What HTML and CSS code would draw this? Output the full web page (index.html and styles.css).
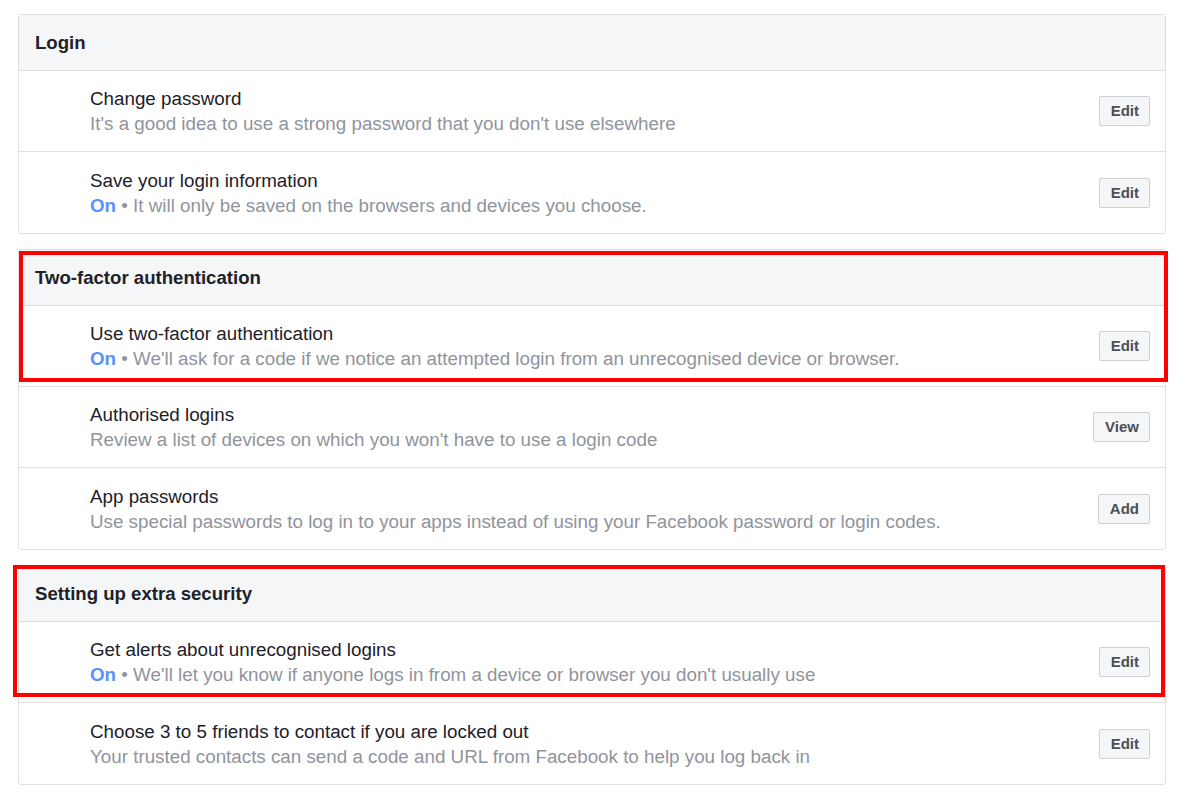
FILE: index.html
```html
<!DOCTYPE html>
<html>
<head>
<meta charset="utf-8">
<link rel="stylesheet" href="styles.css">
</head>
<body>
<div class="page">
  <section class="card">
    <div class="card-head">Login</div>
    <div class="row">
      <div class="text">
        <div class="title">Change password</div>
        <div class="sub">It's a good idea to use a strong password that you don't use elsewhere</div>
      </div>
      <button class="btn">Edit</button>
    </div>
    <div class="row">
      <div class="text">
        <div class="title">Save your login information</div>
        <div class="sub"><span class="on">On</span> • It will only be saved on the browsers and devices you choose.</div>
      </div>
      <button class="btn">Edit</button>
    </div>
  </section>

  <section class="card">
    <div class="highlight hl-two"></div>
    <div class="card-head">Two-factor authentication</div>
    <div class="row">
      <div class="text">
        <div class="title">Use two-factor authentication</div>
        <div class="sub"><span class="on">On</span> • We'll ask for a code if we notice an attempted login from an unrecognised device or browser.</div>
      </div>
      <button class="btn">Edit</button>
    </div>
    <div class="row">
      <div class="text">
        <div class="title">Authorised logins</div>
        <div class="sub">Review a list of devices on which you won't have to use a login code</div>
      </div>
      <button class="btn">View</button>
    </div>
    <div class="row">
      <div class="text">
        <div class="title">App passwords</div>
        <div class="sub">Use special passwords to log in to your apps instead of using your Facebook password or login codes.</div>
      </div>
      <button class="btn">Add</button>
    </div>
  </section>

  <section class="card">
    <div class="highlight hl-extra"></div>
    <div class="card-head">Setting up extra security</div>
    <div class="row">
      <div class="text">
        <div class="title">Get alerts about unrecognised logins</div>
        <div class="sub"><span class="on">On</span> • We'll let you know if anyone logs in from a device or browser you don't usually use</div>
      </div>
      <button class="btn">Edit</button>
    </div>
    <div class="row">
      <div class="text">
        <div class="title">Choose 3 to 5 friends to contact if you are locked out</div>
        <div class="sub">Your trusted contacts can send a code and URL from Facebook to help you log back in</div>
      </div>
      <button class="btn">Edit</button>
    </div>
  </section>
</div>
</body>
</html>
```

FILE: styles.css
```css
html, body {
  margin: 0;
  padding: 0;
  background: #ffffff;
}

body {
  font-family: "Liberation Sans", Arial, sans-serif;
  color: #1d2129;
}

.page {
  display: flex;
  flex-direction: column;
  gap: 15px;
  padding: 14px 12px 0 18px;
  width: 1148px;
}

.card {
  position: relative;
  border: 1px solid #dddfe2;
  border-radius: 3px;
  background: #ffffff;
}

.card-head {
  height: 55px;
  display: flex;
  align-items: center;
  padding-left: 16px;
  background: #f5f6f7;
  font-size: 18.6px;
  font-weight: bold;
  color: #1d2129;
  border-radius: 3px 3px 0 0;
}

.row {
  height: 80px;
  border-top: 1px solid #dddfe2;
  display: flex;
  align-items: center;
  justify-content: space-between;
  padding: 0 15px 0 71px;
}

.row:last-child {
  height: 81px;
}

.text {
  display: flex;
  flex-direction: column;
}

.title {
  font-size: 18.8px;
  line-height: 25px;
  color: #1d2129;
}

.sub {
  font-size: 18.8px;
  line-height: 25px;
  color: #90949c;
}

.on {
  color: #5890ff;
  font-weight: bold;
}

.btn {
  height: 30px;
  padding: 0 10px 0 11px;
  border: 1px solid #ced0d4;
  border-radius: 2px;
  background: #f5f6f7;
  color: #4b4f56;
  font-family: "Liberation Sans", Arial, sans-serif;
  font-size: 15px;
  font-weight: bold;
  line-height: 28px;
  flex-shrink: 0;
}

.highlight {
  position: absolute;
  border: 4px solid #ff0000;
  box-sizing: border-box;
  pointer-events: none;
  z-index: 2;
}

.hl-two {
  top: 1px;
  left: 0px;
  width: 1149px;
  height: 131px;
}

.hl-extra {
  top: -1px;
  left: -6px;
  width: 1152px;
  height: 132px;
}
```
